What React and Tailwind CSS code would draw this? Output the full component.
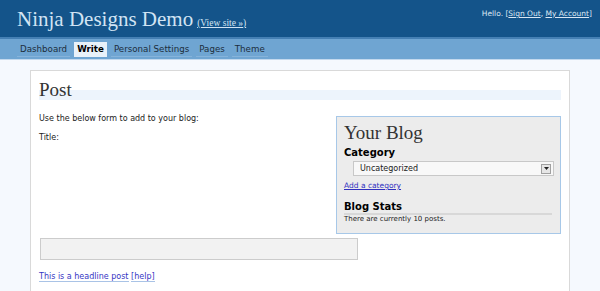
export default function App() {
  const nav = ["Dashboard", "Write", "Personal Settings", "Pages", "Theme"];
  return (
    <div className="w-[600px] h-[291px] overflow-hidden bg-[#f5f9fe] font-['DejaVu_Sans',sans-serif] text-[#222]">
      {/* top bar */}
      <div className="h-[37px] bg-[#14548a] flex justify-between items-start">
        <div className="flex items-baseline pl-[17px] pt-[6px]">
          <span className="font-['Liberation_Serif',serif] text-[21px] leading-[26px] text-[#d2e4f4]">Ninja Designs Demo</span>
          <a className="ml-[4px] font-['Liberation_Serif',serif] text-[9.5px] text-[#d2e4f4] underline">(View site »)</a>
        </div>
        <div className="pr-[8px] pt-[8px] text-[7.5px] text-[#dbe8f4]">
          Hello. [<a className="underline">Sign Out</a>, <a className="underline">My Account</a>]
        </div>
      </div>
      <div className="h-[2px] bg-[#4580b4]" />
      {/* nav */}
      <div className="h-[21px] bg-[#6fa5d2] flex items-center pl-[17px] gap-[4px] border-b border-[#c3d9ee]">
        {nav.map((n) => (
          <span
            key={n}
            className={
              n === "Write"
                ? "mt-[1px] px-[3px] h-[15px] leading-[15px] text-[8.7px] font-bold text-black bg-[#e8f1f9]"
                : "mt-[1px] px-[3px] h-[15px] leading-[15px] text-[8.7px] text-[#1c2d3c] border-b border-[#86b3da]"
            }
          >
            {n}
          </span>
        ))}
      </div>
      {/* content */}
      <div className="ml-[30px] mt-[10px] w-[540px] h-[230px] bg-white border border-[#d9d9d9] px-[8px]">
        <h2 className="mt-[8px] font-['Liberation_Serif',serif] text-[19px] leading-[22px] text-[#333] bg-[linear-gradient(to_bottom,transparent_48%,#edf4fc_48%,#edf4fc_95%,transparent_95%)]">
          Post
        </h2>
        <div className="flex">
          <div className="flex-1 text-[8px]">
            <p className="mt-[12px]">Use the below form to add to your blog:</p>
            <p className="mt-[7px]">Title:</p>
          </div>
          <div className="mt-[15px] w-[225px] h-[118px] bg-[#ececec] border border-[#a7c8e8] px-[7px]">
            <div className="mt-[5px] font-['Liberation_Serif',serif] text-[19px] leading-[22px] text-[#333]">Your Blog</div>
            <div className="mt-[3px] text-[10px] leading-[12px] font-bold text-black">Category</div>
            <div className="mt-[2px] ml-[9px] w-[201px] h-[15px] bg-[#f8f8f8] border border-[#c8c8c8] flex items-center justify-between pl-[6px] pr-[2px]">
              <span className="text-[8px] text-[#222]">Uncategorized</span>
              <span className="w-[10px] h-[10px] bg-[#e6e6e6] border border-[#a0a0a0] flex items-center justify-center">
                <svg width="5" height="3" viewBox="0 0 5 3">
                  <path d="M0 0h5L2.5 3z" fill="#222" />
                </svg>
              </span>
            </div>
            <a className="block mt-[5px] text-[7.5px] leading-[9px] text-[#3030c0] underline">Add a category</a>
            <div className="mt-[11px] mr-[1px] text-[10px] leading-[12px] font-bold text-black border-b-2 border-[#d8d8d8]">Blog Stats</div>
            <div className="mt-0 text-[7px] leading-[9px] text-[#222]">There are currently 10 posts.</div>
          </div>
        </div>
        <div className="mt-[4px] ml-[1px] w-[318px] h-[22px] bg-[#f2f2f2] border border-[#cccccc]" />
        <div className="mt-[11px] text-[8px]">
          <a className="text-[#3636c4] border-b border-[#a9c3e6]">This is a headline post</a>{" "}
          <a className="text-[#3636c4] border-b border-[#a9c3e6]">[help]</a>
        </div>
      </div>
    </div>
  );
}
